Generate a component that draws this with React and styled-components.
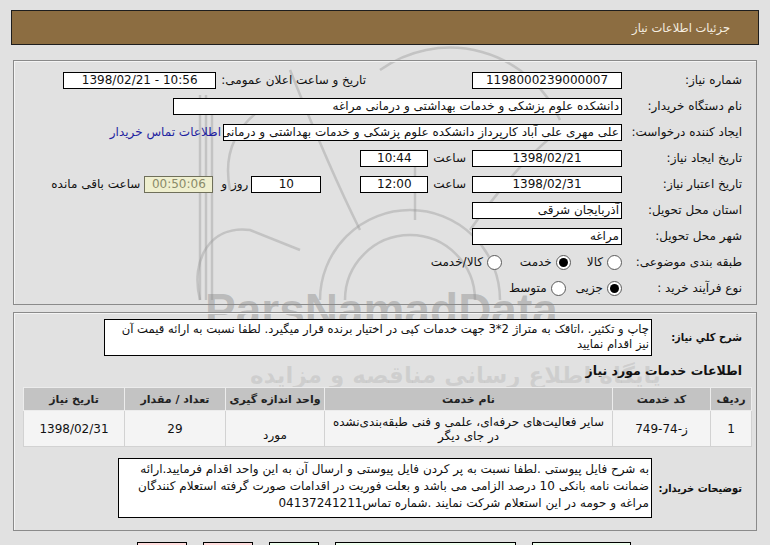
import React from 'react'
import styled, { createGlobalStyle } from 'styled-components'

const GlobalStyle = createGlobalStyle`
  body {
    margin: 0;
    background: #e1e1e1;
    font-family: "DejaVu Sans", Tahoma, sans-serif;
    font-size: 12px;
    color: #111;
  }
`

const Page = styled.div`
  position: relative;
  direction: rtl;
  padding: 10px 11px 0 11px;
  height: 545px;
  box-sizing: border-box;
  overflow: hidden;
`

const Header = styled.div`
  position: relative;
  z-index: 1;
  height: 33px;
  background: #8c6d41;
  border: 1px solid #1e1e1e;
  display: flex;
  align-items: center;
  padding-right: 28px;
  color: #f6efe2;
  font-size: 11.5px;
`

const Panel = styled.div`
  position: relative;
  z-index: 1;
  margin: ${p => p.$top}px 2px 0 2px;
  border: 1px solid #8a8a8a;
  box-shadow: inset 1px 1px 0 #f4f4f4;
  padding: 6px 14px 3px 14px;
`

const Row = styled.div`
  display: flex;
  align-items: center;
  height: 26px;
  white-space: nowrap;
`

const Label = styled.div`
  width: ${p => p.$w || 120}px;
  flex: none;
  text-align: right;
  white-space: nowrap;
  font-weight: ${p => (p.$bold ? 'bold' : 'normal')};
  font-size: ${p => (p.$bold ? '11px' : '12px')};
  font-family: ${p => (p.$bold ? '"DejaVu Sans Condensed", "DejaVu Sans", sans-serif' : 'inherit')};
`

const Text = styled.span`
  margin-right: ${p => p.$gap || 0}px;
  flex: none;
`

const Box = styled.div`
  flex: none;
  width: ${p => p.$w}px;
  height: 15px;
  line-height: 15px;
  margin-right: ${p => p.$gap || 0}px;
  background: ${p => (p.$muted ? '#efefcf' : '#fff')};
  color: ${p => (p.$muted ? '#8a8a6a' : '#111')};
  border: 1px solid ${p => (p.$muted ? '#6f6f5a' : '#000')};
  text-align: ${p => (p.$center ? 'center' : 'right')};
  direction: ${p => (p.$ltr ? 'ltr' : 'rtl')};
  padding: 0 2px;
  overflow: hidden;
  white-space: nowrap;
`

const Link = styled.span`
  color: #1f1fa0;
  margin-right: 2px;
`

const RadioGroup = styled.div`
  display: flex;
  align-items: center;
`

const RadioItem = styled.label`
  display: flex;
  align-items: center;
  gap: 4px;
  margin-left: ${p => p.$space}px;
`

const Dot = styled.span`
  width: 13px;
  height: 13px;
  border-radius: 50%;
  border: 1px solid #5a5a5a;
  background: #fff;
  display: flex;
  align-items: center;
  justify-content: center;
  &::after {
    content: '';
    display: ${p => (p.$on ? 'block' : 'none')};
    width: 9px;
    height: 9px;
    border-radius: 50%;
    background: #000;
  }
`

const Field = styled.div`
  display: flex;
  align-items: center;
  margin-top: ${p => p.$top || 0}px;
`

const Area = styled.div`
  flex: none;
  width: ${p => p.$w}px;
  height: ${p => p.$h}px;
  background: #fff;
  border: 1px solid #000;
  padding: 2px 2px 0 2px;
  line-height: ${p => p.$lh}px;
  font-size: ${p => p.$size || 12}px;
  text-align: right;
  white-space: nowrap;
  box-sizing: border-box;
  overflow: hidden;
`

const Section = styled.div`
  font-weight: bold;
  font-size: 12.5px;
  margin-top: 6px;
  height: 18px;
  line-height: 18px;
`

const Table = styled.table`
  margin: 7px -10px 0 2px;
  width: 722px;
  border-collapse: collapse;
  table-layout: fixed;
`

const Th = styled.th`
  width: ${p => p.$w}px;
  height: 22px;
  background: #c3c3c3;
  border: 1px solid #ececec;
  font-size: 11px;
  font-weight: bold;
  color: #222;
  padding: 0;
`

const Td = styled.td`
  height: 31px;
  background: #f4f4f4;
  border: 1px solid #d2d2d2;
  text-align: center;
  font-size: 12px;
  line-height: 14px;
  padding: 0 4px;
  vertical-align: ${p => (p.$low ? 'bottom' : 'middle')};
  padding-bottom: ${p => (p.$low ? 4 : 0)}px;
`

const Buttons = styled.div`
  position: relative;
  z-index: 1;
  display: flex;
  gap: 16px;
  margin: 11px 128px 0 0;
`

const Btn = styled.div`
  width: ${p => p.$w}px;
  height: 24px;
  border: 1px solid #000;
  background: ${p => (p.$red ? '#ffdcdc' : '#eefeee')};
`

const Watermark = styled.div`
  position: absolute;
  inset: 0;
  z-index: 0;
  pointer-events: none;
`

const Mark = styled.div`
  position: absolute;
  left: ${p => p.$x}px;
  top: ${p => p.$y}px;
  font-size: ${p => p.$size}px;
  font-weight: bold;
  font-style: ${p => (p.$italic ? 'italic' : 'normal')};
  color: rgba(140, 140, 140, ${p => p.$a});
  white-space: nowrap;
  font-family: ${p => (p.$latin ? '"Liberation Sans", Arial, sans-serif' : '"DejaVu Sans", sans-serif')};
`

function Radio({ label, on, space }) {
  return (
    <RadioItem $space={space}>
      <Dot $on={on} />
      <span>{label}</span>
    </RadioItem>
  )
}

export default function App() {
  return (
    <Page>
      <GlobalStyle />
      <Watermark>
        <svg width="770" height="545" style={{ position: 'absolute', left: 0, top: 0 }}>
          <g fill="none" stroke="rgba(150,150,150,0.4)" strokeWidth="2.5">
            <path d="M200 95 L200 300 M206 95 L206 300 M212 100 L212 300" />
            <path d="M200 300 C190 260 210 225 250 230 L300 250" />
            <path d="M320 300 A90 90 0 0 1 500 300" />
            <path d="M345 300 A65 65 0 0 1 475 300" />
            <path d="M290 70 Q330 170 360 230" />
            <path d="M415 150 L415 220" />
            <path d="M470 230 Q520 160 560 130" />
            <path d="M560 120 A120 120 0 0 0 380 70" />
            <path d="M230 190 Q220 140 260 110" />
          </g>
        </svg>
        <Mark $x={205} $y={283} $size={46} $a={0.45} $latin>ParsNamadData</Mark>
        <Mark $x={265} $y={333} $size={19} $a={0.22} $italic>مرکز فراوری اطلاعات پارس نماد داده</Mark>
        <Mark $x={250} $y={362} $size={23} $a={0.22}>پایگاه اطلاع رسانی مناقصه و مزایده</Mark>
        <Mark $x={300} $y={400} $size={32} $a={0.22}>۰۲۱-۸۸۳۴۹۶۷۰</Mark>
      </Watermark>

      <Header>جزئیات اطلاعات نیاز</Header>

      <Panel $top={15}>
        <Row>
          <Label>شماره نیاز:</Label>
          <Box $w={144} $center>1198000239000007</Box>
          <Text $gap={106}>تاریخ و ساعت اعلان عمومی:</Text>
          <Box $w={147} $gap={5} $center $ltr>1398/02/21 - 10:56</Box>
        </Row>
        <Row>
          <Label>نام دستگاه خریدار:</Label>
          <Box $w={443}>دانشکده علوم پزشکی و خدمات بهداشتی و درمانی مراغه</Box>
        </Row>
        <Row>
          <Label>ایجاد کننده درخواست:</Label>
          <Box $w={393}>علی  مهری علی آباد کارپرداز دانشکده علوم پزشکی و خدمات بهداشتی و درمانی مراغه</Box>
          <Link>اطلاعات تماس خریدار</Link>
        </Row>
        <Row>
          <Label>تاریخ ایجاد نیاز:</Label>
          <Box $w={144} $center>1398/02/21</Box>
          <Text $gap={6}>ساعت</Text>
          <Box $w={62} $gap={5} $center>10:44</Box>
        </Row>
        <Row>
          <Label>تاریخ اعتبار نیاز:</Label>
          <Box $w={144} $center>1398/02/31</Box>
          <Text $gap={6}>ساعت</Text>
          <Box $w={62} $gap={5} $center>12:00</Box>
          <Box $w={64} $gap={39} $center>10</Box>
          <Text $gap={3}>روز و</Text>
          <Box $w={63} $gap={8} $center $muted>00:50:06</Box>
          <Text $gap={4}>ساعت باقی مانده</Text>
        </Row>
        <Row>
          <Label>استان محل تحویل:</Label>
          <Box $w={144}>آذربایجان شرقی</Box>
        </Row>
        <Row>
          <Label>شهر محل تحویل:</Label>
          <Box $w={144}>مراغه</Box>
        </Row>
        <Row>
          <Label>طبقه بندی موضوعی:</Label>
          <RadioGroup>
            <Radio label="کالا" space={16} />
            <Radio label="خدمت" on space={18} />
            <Radio label="کالا/خدمت" space={0} />
          </RadioGroup>
        </Row>
        <Row>
          <Label>نوع فرآیند خرید :</Label>
          <RadioGroup>
            <Radio label="جزیی" on space={10} />
            <Radio label="متوسط" space={0} />
          </RadioGroup>
        </Row>
      </Panel>

      <Panel $top={7}>
        <Field>
          <Label $w={90} $bold>شرح کلي نیاز:</Label>
          <Area $w={548} $h={37} $lh={15} $size={11.6}>
            چاپ و تکثیر. ،اتاقک به متراژ 2*3 جهت خدمات کپی در اختیار برنده قرار میگیرد. لطفا نسبت به ارائه قیمت آن
            <br />
            نیز اقدام نمایید
          </Area>
        </Field>
        <Section>اطلاعات خدمات مورد نیاز</Section>
        <Table>
          <thead>
            <tr>
              <Th $w={40}>ردیف</Th>
              <Th $w={97}>کد خدمت</Th>
              <Th $w={287}>نام خدمت</Th>
              <Th $w={98}>واحد اندازه گیری</Th>
              <Th $w={100}>تعداد / مقدار</Th>
              <Th $w={100}>تاریخ نیاز</Th>
            </tr>
          </thead>
          <tbody>
            <tr>
              <Td>1</Td>
              <Td>ز-74-749</Td>
              <Td>سایر فعالیت‌های حرفه‌ای، علمی و فنی طبقه‌بندی‌نشده در جای دیگر</Td>
              <Td $low>مورد</Td>
              <Td>29</Td>
              <Td>1398/02/31</Td>
            </tr>
          </tbody>
        </Table>
        <Field $top={11}>
          <Label $w={90} $bold>توضیحات خریدار:</Label>
          <Area $w={534} $h={60} $lh={17}>
            به شرح فایل پیوستی .لطفا نسبت به پر کردن فایل پیوستی و ارسال آن به این واحد اقدام فرمایید.ارائه
            <br />
            ضمانت نامه بانکی 10 درصد الزامی می باشد و بعلت فوریت در اقدامات صورت گرفته استعلام کنندگان
            <br />
            مراغه و حومه در این استعلام شرکت نمایند .شماره تماس04137241211
          </Area>
        </Field>
        <div style={{ height: 9 }} />
      </Panel>

      <Buttons>
        <Btn $w={97} />
        <Btn $w={179} />
        <Btn $w={48} />
        <Btn $w={48} $red />
        <Btn $w={48} $red />
      </Buttons>
    </Page>
  )
}
